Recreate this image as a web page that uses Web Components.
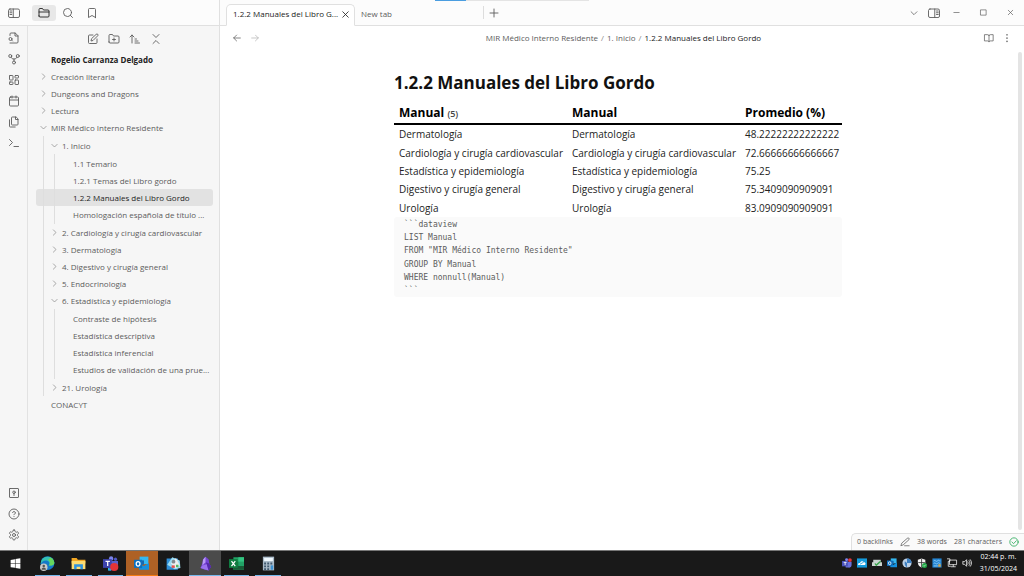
<!DOCTYPE html>
<html lang="es">
<head>
<meta charset="utf-8">
<title>1.2.2 Manuales del Libro Gordo</title>
<style>
  html, body { margin: 0; height: 100%; }
  body { font: 8px/16px "Open Sans", "Noto Sans", sans-serif; color: #5c5c5c; background: #fff; overflow: hidden; }
</style>
</head>
<body>
<desktop-shell></desktop-shell>
<script>
const BASE = `
  *{box-sizing:border-box}
  button{font:inherit;color:inherit;background:none;border:0;padding:0;margin:0;display:flex;align-items:center;justify-content:center;flex:none}
  ul,ol,nav,h1,p{margin:0;padding:0;list-style:none}`;

/* Line icons on a 24 unit grid */
const LINE = {
  panelLeft: '<rect x="1" y="4" width="22" height="17" rx="3"/><path d="M10.500 4v17M4 8h3.500M4 11.500h3.500M4 15h3.500"/>',
  panelRight: '<rect x="1" y="4" width="22" height="17" rx="3"/><path d="M13.500 4v17M17 8h3.500M17 11.500h3.500M17 15h3.500"/>',
  folder: '<path d="M2 10h20M2 18V5a2 2 0 0 1 2-2h5l2 3h9a2 2 0 0 1 2 2v10a2 2 0 0 1-2 2H4a2 2 0 0 1-2-2z"/>',
  search: '<circle cx="11" cy="11" r="8"/><path d="m21 21-4.300-4.300"/>',
  bookmark: '<path d="m19 21-7-4-7 4V5a2 2 0 0 1 2-2h10a2 2 0 0 1 2 2v16z"/>',
  fileSearch: '<path d="M4 22h14a2 2 0 0 0 2-2V7.500L14.500 2H6a2 2 0 0 0-2 2v3"/><path d="M14 2v6h6"/><circle cx="5" cy="14" r="3"/><path d="m9 18-1.500-1.500"/>',
  graph: '<circle cx="12" cy="19" r="3"/><circle cx="4.500" cy="6" r="3"/><circle cx="19.500" cy="6" r="3"/><path d="M18 8.500c-1 2.500-3 3.500-6 3.500s-5-1-6-3.500M12 12v4"/>',
  dashboard: '<rect x="3" y="3" width="7" height="9" rx="1"/><rect x="14" y="3" width="7" height="5" rx="1"/><rect x="14" y="12" width="7" height="9" rx="1"/><rect x="3" y="16" width="7" height="5" rx="1"/>',
  calendar: '<rect x="3" y="4" width="18" height="18" rx="2"/><path d="M16 2v4M8 2v4M3 10h18"/>',
  files: '<path d="M15.500 2H8.600A1.600 1.600 0 0 0 7 3.600v12.800A1.600 1.600 0 0 0 8.600 18h9.800a1.600 1.600 0 0 0 1.600-1.600V6.500z"/><path d="M15 2v5h5M3 7.600v12.800A1.600 1.600 0 0 0 4.600 22h9.800"/>',
  terminal: '<path d="m3 17 6-6-6-6M12 19h9"/>',
  vault: '<rect x="3" y="3" width="18" height="18" rx="1"/><circle cx="12" cy="10.500" r="2.500"/><path d="M12 13v4"/>',
  help: '<circle cx="12" cy="12" r="10"/><path d="M9.100 9a3 3 0 0 1 5.800 1c0 2-3 3-3 3M12 17v.100"/>',
  settings: '<path d="M12.220 2h-.44a2 2 0 0 0-2 2v.18a2 2 0 0 1-1 1.730l-.43.25a2 2 0 0 1-2 0l-.15-.08a2 2 0 0 0-2.730.73l-.22.38a2 2 0 0 0 .73 2.730l.15.1a2 2 0 0 1 1 1.720v.51a2 2 0 0 1-1 1.740l-.15.09a2 2 0 0 0-.73 2.730l.22.38a2 2 0 0 0 2.730.73l.15-.08a2 2 0 0 1 2 0l.43.25a2 2 0 0 1 1 1.730V20a2 2 0 0 0 2 2h.44a2 2 0 0 0 2-2v-.18a2 2 0 0 1 1-1.730l.43-.25a2 2 0 0 1 2 0l.15.08a2 2 0 0 0 2.730-.73l.22-.39a2 2 0 0 0-.73-2.730l-.15-.08a2 2 0 0 1-1-1.740v-.5a2 2 0 0 1 1-1.740l.15-.09a2 2 0 0 0 .73-2.730l-.22-.38a2 2 0 0 0-2.730-.73l-.15.08a2 2 0 0 1-2 0l-.43-.25a2 2 0 0 1-1-1.730V4a2 2 0 0 0-2-2z"/><circle cx="12" cy="12" r="3"/>',
  newNote: '<path d="M12 4H5a2 2 0 0 0-2 2v13a2 2 0 0 0 2 2h13a2 2 0 0 0 2-2v-7"/><path d="M18.500 2.500a2.100 2.100 0 0 1 3 3L12 15l-4 1 1-4z"/>',
  newFolder: '<path d="M2 18V5a2 2 0 0 1 2-2h5l2 3h9a2 2 0 0 1 2 2v10a2 2 0 0 1-2 2H4a2 2 0 0 1-2-2zM12 10v6M9 13h6"/>',
  sort: '<path d="m2 8 4-4 4 4M6 4v16M12 12h3M12 16h6M12 20h9"/>',
  collapse: '<path d="m6 21 6-6 6 6M6 3l6 6 6-6"/>',
  close: '<path d="M18 6 6 18M6 6l12 12"/>',
  plus: '<path d="M4 12h16M12 4v16"/>',
  left: '<path d="m11 19-7-7 7-7M20 12H4"/>',
  right: '<path d="M4 12h16M13 5l7 7-7 7"/>',
  down: '<path d="m5 9 7 7 7-7"/>',
  chevron: '<path d="m9 5 7 7-7 7"/>',
  minimize: '<path d="M5 12h14"/>',
  maximize: '<path d="M5 5h14v14H5z"/>',
  book: '<path d="M2 4h7a3 3 0 0 1 3 3 3 3 0 0 1 3-3h7v15h-7a3 3 0 0 0-3 2 3 3 0 0 0-3-2H2zM12 7v14"/>',
  dots: '<path d="M12 4v.500M12 12v.500M12 20v.500" stroke-width="3.500"/>',
  pencil: '<path d="M11 21h11M17.500 3a2.600 2.600 0 0 1 4 3.500L7.500 19 2 21l2-5.500z"/>',
  check: '<circle cx="12" cy="12" r="10"/><path d="m7 12 4 4 6.500-7"/>',
  network: '<path d="M7 5h16v11H7zM15 16v4M10 21h10M1 2h6v6H3v12h5"/>',
  sound: '<path d="M2 9v6h4l5 5V4L6 9zM14 9c1 2 1 4 0 6M17 6c3 4 3 8 0 12M20 4c4 5 4 11 0 16"/>'
};

/* Full colour application marks, same grid */
const ART = {
  windows: '<path fill="#fff" d="M3 5.500 11 4v7.500H3zM12 3.900 21 2.500v9h-9zM3 12.500h8V20l-8-1.300zM12 12.500h9v9L12 20.200z"/>',
  edge: '<circle cx="12" cy="11.500" r="11" fill="#1679c8"/><path fill="#35c1b4" d="M1.500 9C4-1 20-2 23 10c0 5-5 6-9 5 3-5-1-8-5-8-4 0-7 3-7.500 6z"/><path fill="#67d65c" d="M17 2.500c5 3 7 8 5 11-2 2-5 2-8 1.500 3-2 3-6-1-9z"/><path fill="#1679c8" d="M6 9c4-2 9 0 8 4-3 1-2 4 2 5-4 3-10 0-10-9z"/><circle cx="6" cy="18" r="6" fill="#c9c9c9"/><circle cx="6" cy="16" r="2" fill="#555"/><path fill="#555" d="M2.500 22c0-5 7-5 7 0z"/>',
  explorer: '<path fill="#f4a823" d="M1 3h8l2 3h12v6H1z"/><path fill="#fddc73" d="M1 8h22v13H1z"/><path fill="#2f93df" d="M5 21v-8h14v8h-4v-4H9v4z"/>',
  teams: '<circle cx="13" cy="4" r="3.500" fill="#7b83eb"/><circle cx="20" cy="5" r="2.500" fill="#5059c9"/><path fill="#5961cd" d="M9 8h15v8c0 4-5 5-7 3l-4 4H9z"/><path fill="#3c43ac" d="M0 5h14v14H0z"/><path stroke="#fff" stroke-width="2" d="M4 8.500h7M7.500 8.500V16"/><path stroke="#22bde7" stroke-width="2" d="M9 19v3h4"/><circle cx="18" cy="17.500" r="6.500" fill="#e33438"/>',
  teamsTray: '<circle cx="11" cy="4" r="3.500" fill="#7b83eb"/><path fill="#6870dc" d="M7 9h16v8c0 5-5 7-8 6H9z"/><path fill="#4b53bc" d="M0 7h14v13H0z"/><path stroke="#fff" stroke-width="2" d="M4 10.500h7M7.500 10.500V17"/><circle cx="19" cy="5" r="4.500" fill="#e33438"/>',
  outlook: '<path fill="#35b8f1" d="M9 1h14v12H9z"/><path fill="#1769b0" d="M9 7h7v7H9z"/><path fill="#1490df" d="M8 22h16V11l-8 5-8-3z"/><path fill="#0c70c0" d="M0 6h13v13H0z"/><ellipse cx="6.500" cy="12.500" rx="3" ry="3.500" stroke="#fff" stroke-width="2"/>',
  photo: '<path fill="#2e8ed7" d="M1 4h18v18H1z"/><path fill="#9bdcf3" d="M2 14 10 2l12 5 1 12-9 2z"/><path fill="#eee" d="m8 12 8-9 6 12-6 5z"/><circle cx="12" cy="9" r="3" fill="#808a91"/><path fill="#e6504d" d="M9 15h5v4H9z"/><path fill="#54b967" d="M16 14h4v4h-4z"/>',
  obsidian: '<path fill="#7543d5" d="m12 1 5 4 1 7 3 5-4 6-6-1-7-3 3-8 1-6z"/><path fill="#b99af5" d="m12 1-4 5-1 9 5-5z"/><path fill="#9b70ee" d="m7 15 7-2 3 10-13-4z"/><path fill="#5529a9" d="m12 10 6 2 3 5-4 6-3-10z"/>',
  excel: '<path fill="#21a366" d="M7 2h17v20H7z"/><path fill="#33c481" d="M15 2h9v7h-9z"/><path fill="#107c41" d="M7 9h8v7H7z"/><path fill="#185c37" d="M7 16h17v6H7z"/><path fill="#107c41" d="M0 5h14v14H0z"/><path stroke="#fff" stroke-width="2" d="m4 8 6 8M10 8l-6 8"/>',
  calc: '<path fill="#a9bac8" d="M3 1h18v22H3z"/><path fill="#eef7fd" d="M5 3h14v5H5z"/><path stroke="#40596e" stroke-width="3" stroke-dasharray="3 2" d="M5 12h14M5 16.500h9M5 21h9"/><path fill="#3c91d2" d="M15.500 15h4v7h-4z"/>',
  cloud: '<path fill="#149bdc" d="M0 1h24v22H0z"/><path fill="#fff" d="M3 17c-2-4 2-6 4-5 2-6 8-5 9-2 5-1 6 6 2 7z"/><path stroke="#149bdc" stroke-width="2" d="m7 15 9-5"/>',
  printer: '<path fill="#cbd4d1" d="M3 4h18v6h3v9H0v-9h3z"/><path fill="#3aa54d" d="m6 14 4 6L22 9l-3-2-9 8-2-3z"/>',
  globe: '<circle cx="12" cy="12" r="11" fill="#bcd0e5"/><path fill="#3d7fc0" d="M12 1c8 0 11 5 11 11H12zM7 8l5 4v10c-5-2-7-8-5-14z"/>',
  shield: '<path fill="#f2f2f2" d="m11 1 9 3v7c0 6-4 10-9 12-5-2-9-6-9-12V4z"/><path stroke="#333" stroke-width="2" d="M11 2v20M3 11h16"/><circle cx="18" cy="18" r="6" fill="#20a846"/><path stroke="#fff" stroke-width="1.500" d="m15 18 2 2 4-4"/>',
  display: '<path fill="#2585d2" d="M1 1h22v22H1z"/><path stroke="#99d5fa" stroke-width="2" d="M4 7c4-4 6 4 9 0s5 1 7 0M4 13c4-4 6 4 9 0s5 1 7 0M4 19h10"/><path fill="#d6a94d" d="M15 15h6v6h-6z"/>'
};

class UiIcon extends HTMLElement {
  connectedCallback() {
    const n = this.getAttribute('name'), art = ART[n];
    this.attachShadow({mode: 'open'}).innerHTML = `<style>
      :host{display:block;flex:none;width:var(--icon,12px);height:var(--icon,12px)}
      svg{display:block;width:100%;height:100%;overflow:visible}</style>
      <svg viewBox="0 0 24 24" fill="none" aria-hidden="true" ${art ? '' : 'stroke="currentColor" stroke-width="1.800" stroke-linecap="round" stroke-linejoin="round"'}>${art || LINE[n]}</svg>`;
  }
}
customElements.define('ui-icon', UiIcon);

class IconButton extends HTMLElement {
  connectedCallback() {
    this.attachShadow({mode: 'open'}).innerHTML = `<style>${BASE}
      :host{display:block;flex:none}
      button{width:var(--bw,20px);height:var(--bh,20px);border-radius:3px}
      :host([active]) button{background:#e8e8e8;color:#222}</style>
      <button type="button" aria-label="${this.getAttribute('label')}"><ui-icon name="${this.getAttribute('icon')}"></ui-icon></button>`;
  }
}
customElements.define('icon-button', IconButton);

class TreeFolder extends HTMLElement {
  connectedCallback() {
    const open = this.hasAttribute('open');
    this.attachShadow({mode: 'open'}).innerHTML = `<style>${BASE}
      :host{display:block}
      button{width:100%;height:17px;justify-content:flex-start;gap:3px;padding-left:calc(3px + 11px*var(--depth,0));white-space:nowrap}
      ui-icon{--icon:9px;color:#808080}
      .kids{position:relative;padding-top:1px;--next:calc(var(--depth,0) + 1)}
      .kids::before{content:"";position:absolute;z-index:1;top:0;bottom:0;left:calc(7px + 11px*var(--depth,0));width:1px;background:#dedede}
      slot{display:block;--depth:var(--next)}
      :host([leafy]) .kids{padding-bottom:1px}</style>
      <button type="button" aria-expanded="${open}"><ui-icon name="${open ? 'down' : 'chevron'}"></ui-icon><span>${this.getAttribute('label')}</span></button>
      ${open ? '<div class="kids"><slot></slot></div>' : ''}`;
  }
}
customElements.define('tree-folder', TreeFolder);

class TreeFile extends HTMLElement {
  connectedCallback() {
    this.attachShadow({mode: 'open'}).innerHTML = `<style>${BASE}
      :host{display:block}
      a{display:flex;align-items:center;height:17px;padding-left:calc(15px + 11px*var(--depth,0));color:inherit;text-decoration:none;white-space:nowrap;border-radius:3px}
      :host([active]) a{background:#e2e2e2;color:#222}</style>
      <a href="#"><slot></slot></a>`;
  }
}
customElements.define('tree-file', TreeFile);

class SideRibbon extends HTMLElement {
  connectedCallback() {
    const b = (i, l) => `<icon-button icon="${i}" label="${l}"></icon-button>`;
    this.attachShadow({mode: 'open'}).innerHTML = `<style>${BASE}
      :host{display:flex;flex-direction:column;align-items:center;justify-content:space-between;padding:2px 0 5px;border-right:1px solid #e2e2e2}
      nav{display:grid;gap:1px}</style>
      <nav aria-label="Acciones">${b('fileSearch','Buscar nota')}${b('graph','Vista de grafo')}${b('dashboard','Lienzo')}${b('calendar','Nota diaria')}${b('files','Plantillas')}${b('terminal','Comandos')}</nav>
      <nav aria-label="Sistema">${b('vault','Abrir otra bóveda')}${b('help','Ayuda')}${b('settings','Ajustes')}</nav>`;
  }
}
customElements.define('side-ribbon', SideRibbon);

class FileExplorer extends HTMLElement {
  connectedCallback() {
    this.attachShadow({mode: 'open'}).innerHTML = `<style>${BASE}
      :host{display:block;padding:2px 6px 0 8px;min-width:0}
      .tools{display:flex;justify-content:center;gap:1px;height:22px;align-items:center}
      .vault{height:17px;line-height:17px;margin-top:1px;padding-left:15px;color:#222;font-weight:700}</style>
      <div class="tools"><icon-button icon="newNote" label="Nueva nota"></icon-button><icon-button icon="newFolder" label="Nueva carpeta"></icon-button><icon-button icon="sort" label="Ordenar"></icon-button><icon-button icon="collapse" label="Contraer todo"></icon-button></div>
      <p class="vault">Rogelio Carranza Delgado</p>
      <nav aria-label="Archivos">
        <tree-folder label="Creación literaria"></tree-folder>
        <tree-folder label="Dungeons and Dragons"></tree-folder>
        <tree-folder label="Lectura"></tree-folder>
        <tree-folder label="MIR Médico Interno Residente" open>
          <tree-folder label="1. Inicio" open leafy>
            <tree-file>1.1 Temario</tree-file>
            <tree-file>1.2.1 Temas del Libro gordo</tree-file>
            <tree-file active>1.2.2 Manuales del Libro Gordo</tree-file>
            <tree-file>Homologación española de título ...</tree-file>
          </tree-folder>
          <tree-folder label="2. Cardiología y cirugía cardiovascular"></tree-folder>
          <tree-folder label="3. Dermatología"></tree-folder>
          <tree-folder label="4. Digestivo y cirugía general"></tree-folder>
          <tree-folder label="5. Endocrinología"></tree-folder>
          <tree-folder label="6. Estadística y epidemiología" open leafy>
            <tree-file>Contraste de hipótesis</tree-file>
            <tree-file>Estadística descriptiva</tree-file>
            <tree-file>Estadística inferencial</tree-file>
            <tree-file>Estudios de validación de una prue...</tree-file>
          </tree-folder>
          <tree-folder label="21. Urología"></tree-folder>
        </tree-folder>
        <tree-file>CONACYT</tree-file>
      </nav>`;
  }
}
customElements.define('file-explorer', FileExplorer);

class TitleBar extends HTMLElement {
  connectedCallback() {
    this.attachShadow({mode: 'open'}).innerHTML = `<style>${BASE}
      :host{display:grid;grid-template-columns:220px 1fr;height:26px;background:#fcfcfc;position:relative}
      .left,.right{display:flex;align-items:center;border-bottom:1px solid #e0e0e0}
      .left{border-right:1px solid #e0e0e0;padding-left:2px;--bw:24px;--bh:16px}
      .left icon-button:nth-child(2){margin-left:6px}
      .right{padding-left:6px}
      .tab{display:flex;align-items:center;white-space:nowrap;height:22px;align-self:flex-end}
      .tab.on{width:129px;justify-content:space-between;padding:0 3px 2px 6px;background:#fff;border:1px solid #e0e0e0;border-bottom-color:#fff;border-radius:5px 5px 0 0;margin-bottom:-1px;color:#222;--bw:14px;--bh:18px;--icon:11px}
      .tab.off{width:128px;padding-left:6px}
      .sep{width:1px;height:13px;background:#ddd}
      .win{margin-left:auto;display:flex;align-items:center;--bh:24px}
      .win icon-button{--bw:27px;--icon:9px}
      .win icon-button.wide{--bw:18px;--icon:12px}
      .win icon-button.drop{--bw:23px;--icon:10px}
      .progress{position:absolute;left:435px;top:0;width:154px;height:1px;background:linear-gradient(90deg,#4a9de0 31px,#e4e4e4 31px)}</style>
      <div class="left"><icon-button icon="panelLeft" label="Contraer panel"></icon-button><icon-button icon="folder" label="Archivos" active></icon-button><icon-button icon="search" label="Buscar"></icon-button><icon-button icon="bookmark" label="Marcadores"></icon-button></div>
      <div class="right">
        <div class="tab on"><button type="button">1.2.2 Manuales del Libro G...</button><icon-button icon="close" label="Cerrar pestaña"></icon-button></div>
        <div class="tab off"><button type="button">New tab</button></div>
        <i class="sep"></i><icon-button icon="plus" label="Nueva pestaña"></icon-button>
        <div class="win"><icon-button class="drop" icon="down" label="Lista de pestañas"></icon-button><icon-button class="wide" icon="panelRight" label="Panel derecho"></icon-button><icon-button icon="minimize" label="Minimizar"></icon-button><icon-button icon="maximize" label="Maximizar"></icon-button><icon-button icon="close" label="Cerrar"></icon-button></div>
      </div><div class="progress"></div>`;
  }
}
customElements.define('title-bar', TitleBar);

class ViewHeader extends HTMLElement {
  connectedCallback() {
    this.attachShadow({mode: 'open'}).innerHTML = `<style>${BASE}
      :host{display:grid;grid-template-columns:1fr auto 1fr;align-items:center;height:23px;padding:0 8px}
      div{display:flex;--bw:18px;--icon:10px}
      div:last-child{justify-content:flex-end}
      .dim{color:#b5b5b5}
      ol{display:flex;gap:3px;white-space:nowrap;padding-left:3px}
      a{color:inherit;text-decoration:none}
      li+li::before{content:"/";margin-right:3px;color:#888}
      [aria-current]{color:#222}</style>
      <div><icon-button icon="left" label="Atrás"></icon-button><icon-button class="dim" icon="right" label="Adelante"></icon-button></div>
      <ol><li><a href="#">MIR Médico Interno Residente</a></li><li><a href="#">1. Inicio</a></li><li aria-current="page">1.2.2 Manuales del Libro Gordo</li></ol>
      <div><icon-button icon="book" label="Vista de lectura"></icon-button><icon-button icon="dots" label="Más opciones"></icon-button></div>`;
  }
}
customElements.define('view-header', ViewHeader);

class DataTable extends HTMLElement {
  connectedCallback() {
    const rows = [['Dermatología','48.22222222222222'],['Cardiología y cirugía cardiovascular','72.66666666666667'],['Estadística y epidemiología','75.25'],['Digestivo y cirugía general','75.3409090909091'],['Urología','83.0909090909091']];
    this.attachShadow({mode: 'open'}).innerHTML = `<style>${BASE}
      :host{display:block;color:#222}
      table{width:100%;height:115px;table-layout:fixed;border-collapse:collapse;font-size:10px;line-height:18px}
      th,td{text-align:left;padding:0 0 0 5px;white-space:nowrap}
      th{height:22px;font-size:12px;color:#000;border-bottom:2px solid #000}
      th small{font-size:9px;line-height:9px;font-weight:600;color:#444}
      th:nth-child(-n+2){width:173px}</style>
      <table><thead><tr><th scope="col">Manual <small>(5)</small></th><th scope="col">Manual</th><th scope="col">Promedio (%)</th></tr></thead>
      <tbody>${rows.map(r => `<tr><td>${r[0]}</td><td>${r[0]}</td><td>${r[1]}</td></tr>`).join('')}</tbody></table>`;
  }
}
customElements.define('data-table', DataTable);

class CodeBlock extends HTMLElement {
  connectedCallback() {
    this.attachShadow({mode: 'open'}).innerHTML = `<style>${BASE}
      :host{display:block}
      pre{display:grid;align-content:space-between;height:80px;margin:0;padding:1px 10px 0;background:#fafafa;border-radius:3px;font:8px/13px "DejaVu Sans Mono","Liberation Mono",monospace}
      code{font:inherit}</style>
      <pre>${this.textContent.trim().split('\n').map(l => `<code>${l.trim()}</code>`).join('')}</pre>`;
  }
}
customElements.define('code-block', CodeBlock);

class NoteView extends HTMLElement {
  connectedCallback() {
    this.attachShadow({mode: 'open'}).innerHTML = `<style>${BASE}
      :host{display:grid;grid-template-columns:1fr 8px;min-height:0}
      article{width:448px;margin:0 auto;padding-top:21px}
      h1{font-size:17px;line-height:26px;color:#111;margin-bottom:6px;white-space:nowrap}
      .bar{width:4px;background:#e4e4e4;border-radius:2px;margin:3px auto 20px}</style>
      <article><h1>1.2.2 Manuales del Libro Gordo</h1><data-table></data-table>
      <code-block>\`\`\`dataview
        LIST Manual
        FROM "MIR Médico Interno Residente"
        GROUP BY Manual
        WHERE nonnull(Manual)
        \`\`\`</code-block></article><div class="bar"></div>`;
  }
}
customElements.define('note-view', NoteView);

class StatusBar extends HTMLElement {
  connectedCallback() {
    this.attachShadow({mode: 'open'}).innerHTML = `<style>${BASE}
      :host{display:flex;align-items:center;gap:7px;height:17px;padding:0 5px;font-size:7px;background:#fafafa;border:1px solid #e0e0e0;border-width:1px 0 0 1px;border-radius:5px 0 0 0;white-space:nowrap;--icon:10px;--bw:10px;--bh:14px}
      .ok{color:#16a34a}</style>
      <span>0 backlinks</span><icon-button icon="pencil" label="Modo de edición"></icon-button><span>38 words</span><span>281 characters</span><ui-icon class="ok" name="check"></ui-icon>`;
  }
}
customElements.define('status-bar', StatusBar);

class TaskBar extends HTMLElement {
  connectedCallback() {
    const apps = [['windows','Inicio',''],['edge','Edge','run'],['explorer','Explorador','run'],['teams','Teams','run'],['outlook','Outlook','alert'],['photo','Visor',''],['obsidian','Obsidian','run focus'],['excel','Excel','run'],['calc','Calculadora','run']];
    const tray = ['teamsTray','cloud','printer','outlook','globe','shield','display','network','sound'];
    this.attachShadow({mode: 'open'}).innerHTML = `<style>${BASE}
      :host{display:flex;justify-content:space-between;height:26px;background:#191919;border-top:1px solid #777;color:#fff}
      nav{display:grid;grid-template-columns:repeat(9,1fr);width:284px}
      nav button{position:relative;--icon:15px}
      nav button.start{--icon:13px}
      .run::after,.alert::after{content:"";position:absolute;left:3px;right:3px;bottom:0;height:1px;background:#76b9ed}
      .focus{background:#4b4b4b}.focus::after{left:0;right:0}
      .alert{background:#ae6125}.alert::after{left:0;right:0;background:#f57c12}
      .tray{display:flex;align-items:center;gap:5px;padding:0 7px 1px 0;--icon:10px}
      time{font-size:7px;line-height:12px;text-align:center;margin-left:3px;white-space:nowrap}
      time span{display:block}</style>
      <nav aria-label="Barra de tareas">${apps.map(a => `<button type="button" class="${a[2]}${a[0] === 'windows' ? ' start' : ''}" aria-label="${a[1]}"><ui-icon name="${a[0]}"></ui-icon></button>`).join('')}</nav>
      <div class="tray">${tray.map(t => `<ui-icon name="${t}"></ui-icon>`).join('')}<time datetime="2024-05-31T14:44"><span>02:44 p. m.</span><span>31/05/2024</span></time></div>`;
  }
}
customElements.define('task-bar', TaskBar);

class DesktopShell extends HTMLElement {
  connectedCallback() {
    this.attachShadow({mode: 'open'}).innerHTML = `<style>${BASE}
      :host{display:grid;grid-template-rows:auto 1fr auto;height:100vh}
      .work{display:grid;grid-template-columns:28px 192px 1fr;min-height:0;background:#f6f6f6}
      file-explorer{border-right:1px solid #e0e0e0}
      main{position:relative;display:grid;grid-template-rows:auto 1fr;background:#fff;min-width:0;min-height:0}
      status-bar{position:absolute;right:0;bottom:0}</style>
      <title-bar></title-bar>
      <div class="work"><side-ribbon></side-ribbon><file-explorer></file-explorer>
      <main><view-header></view-header><note-view></note-view><status-bar></status-bar></main></div>
      <task-bar></task-bar>`;
  }
}
customElements.define('desktop-shell', DesktopShell);
</script>
</body>
</html>
